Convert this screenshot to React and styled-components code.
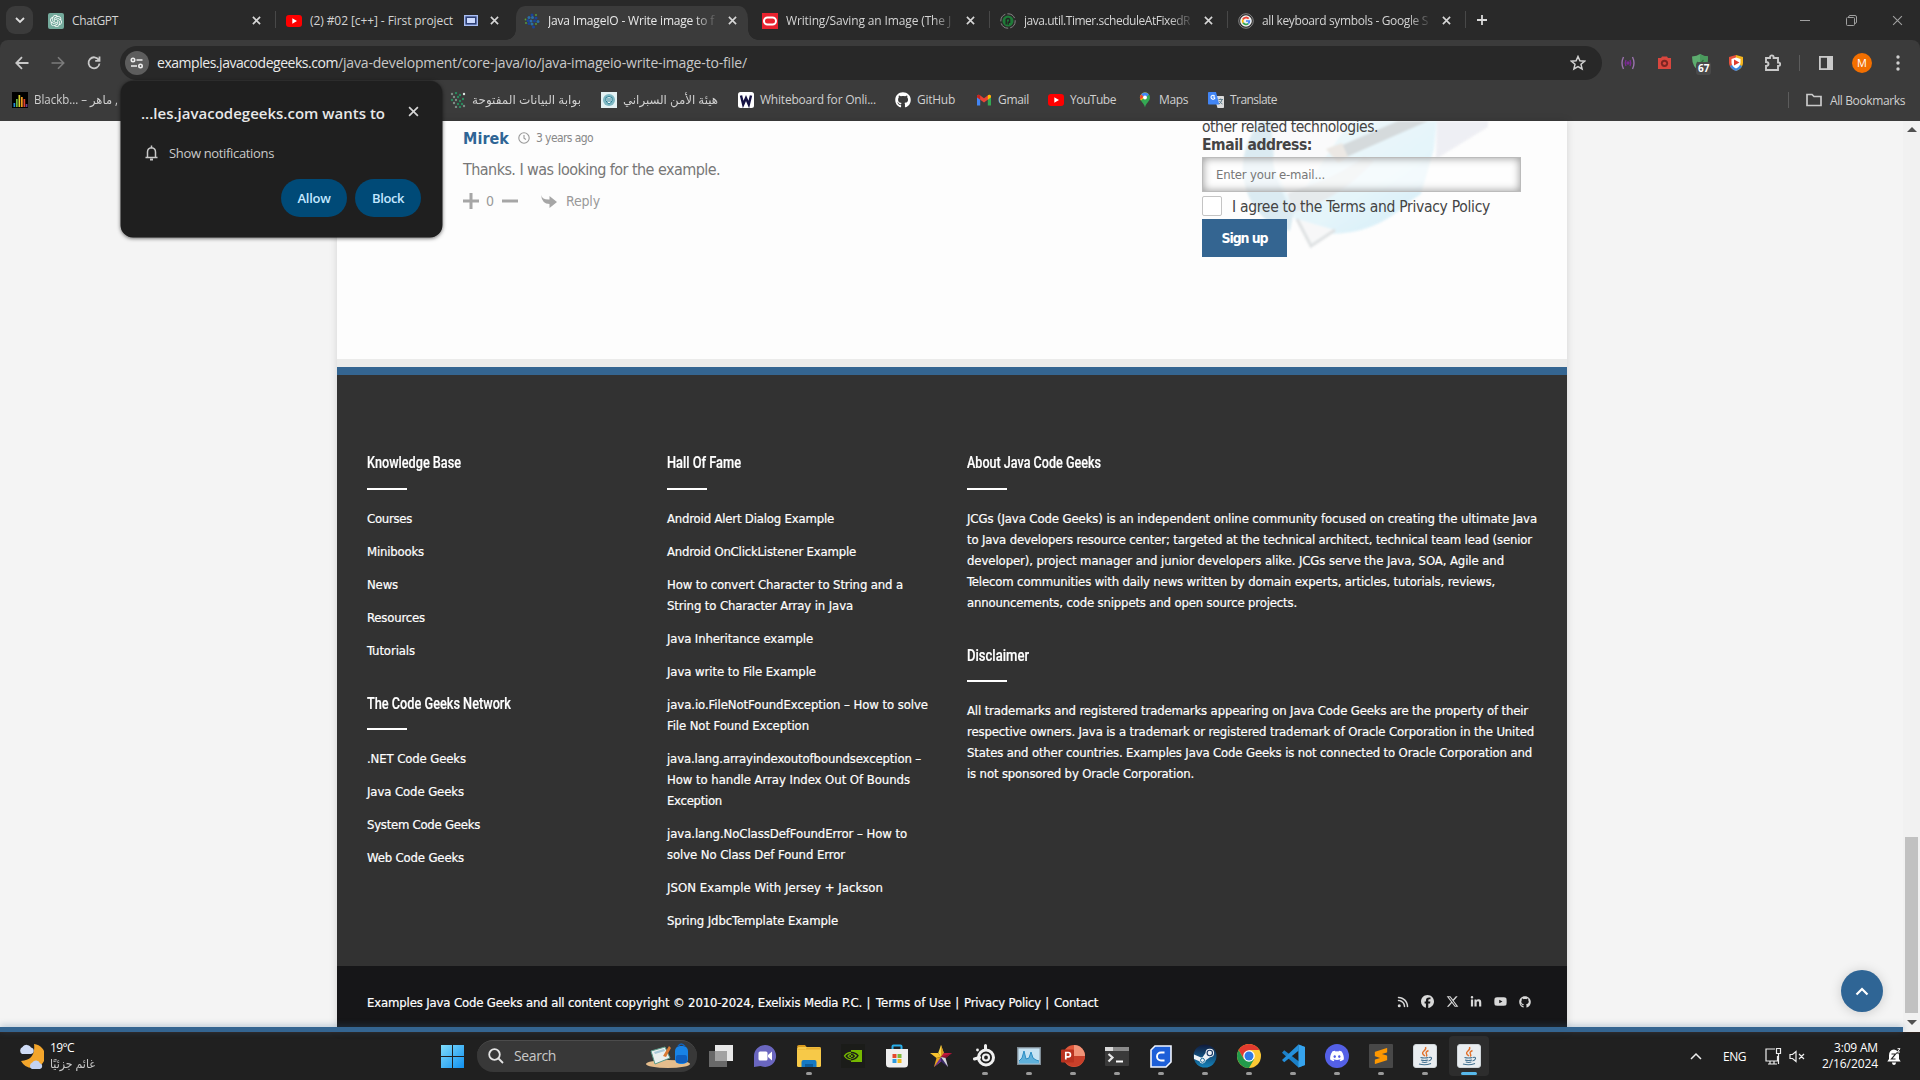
import React, { useLayoutEffect, useRef, useState } from 'react';
import styled, { createGlobalStyle, css } from 'styled-components';
import { FaRss, FaFacebook, FaXTwitter, FaLinkedinIn, FaYoutube, FaGithub, FaSteam, FaDiscord } from 'react-icons/fa6';
import { SiOpenai, SiSublimetext } from 'react-icons/si';

const UI = `'Open Sans', 'Noto Sans', 'DejaVu Sans', sans-serif`;
const SITE = `'DejaVu Sans Condensed', 'DejaVu Sans', sans-serif`;

const Global = createGlobalStyle`
  *, *::before, *::after { box-sizing: border-box; }
  html, body { margin: 0; padding: 0; background: #202020; overflow: hidden; }
  body { font-family: ${UI}; font-size: 12px; }
  svg { display: block; flex: none; }
`;

/* ---------- fitted text ---------- */
const FitBox = styled.span`
  display: inline-block;
  white-space: pre;
  transform-origin: 0 50%;
`;
function Fit({ w, squeeze, children }) {
  const ref = useRef(null);
  const [style, setStyle] = useState({});
  useLayoutEffect(() => {
    const natural = ref.current.getBoundingClientRect().width;
    if (squeeze) setStyle({ transform: `scaleX(${w / natural})`, width: w });
    else setStyle({ letterSpacing: `${(w - natural) / String(children).length}px` });
  }, []);
  return <FitBox ref={ref} style={style}>{children}</FitBox>;
}

/* ---------- shell ---------- */
const Screen = styled.div`
  width: 1920px; height: 1080px; display: flex; flex-direction: column; overflow: hidden; position: relative;
`;
const TabStrip = styled.div`
  height: 40px; flex: none; background: #292929; display: flex; align-items: flex-end; padding-left: 6px;
`;
const SearchTabs = styled.div`
  width: 27px; height: 28px; margin: 0 5px 6px 0; border-radius: 9px; background: #3b3b3b;
  display: flex; align-items: center; justify-content: center;
`;
const Tab = styled.div`
  width: 238px; height: 34px; display: flex; align-items: center; padding: 0 12px 5px 10px; position: relative;
  color: ${p => (p.$active ? '#e9e9e9' : '#d4d4d4')}; font-size: 12px;
  ${p => p.$active && css`
    background: #3b3b3b; background-clip: padding-box; border: solid transparent; border-width: 0 4px 0 2px; border-radius: 11px 13px 0 0; padding: 0 8px 5px;
    &::before, &::after { content: ''; position: absolute; bottom: 0; width: 10px; height: 10px; }
    &::before { left: -10px; background: radial-gradient(circle at 0 0, transparent 9.500px, #3b3b3b 10px); }
    &::after { right: -10px; background: radial-gradient(circle at 100% 0, transparent 9.500px, #3b3b3b 10px); }
  `}
  ${p => p.$line && css`border-right: 1px solid transparent; border-image: linear-gradient(transparent 18%, #484848 18%, #484848 64%, transparent 64%) 1; padding-right: 11px;`}
`;
const Fav = styled.span`width: 16px; height: 16px; flex: none; display: flex; margin-right: 8px;`;
const TabTitle = styled.div`
  flex: 1; overflow: hidden; white-space: nowrap; line-height: 18px; padding-top: 1px;
  mask-image: ${p => (p.$fade ? 'linear-gradient(90deg, #000 calc(100% - 22px), rgba(0,0,0,.1))' : 'none')};
`;
const TabClose = styled.span`width: 16px; margin-left: 8px; display: flex; justify-content: center; flex: none;`;
const NewTab = styled.span`width: 32px; height: 40px; display: flex; align-items: center; justify-content: center;`;
const WinControls = styled.div`
  margin-left: auto; height: 40px; display: flex; align-items: center; color: #9c9c9c;
  > span { width: 46px; display: flex; justify-content: center; }
`;
const Toolbar = styled.div`
  height: 43px; flex: none; background: #3b3b3b; display: flex; align-items: center; padding: 3px 0 0 4px; border-radius: 8px 8px 0 0;
`;
const ToolbarBack = styled.div`background: #292929; flex: none;`;
const Tool = styled.span`width: ${p => p.$w || 36}px; flex: none; display: flex; justify-content: center; align-items: center; position: relative;`;
const Omnibox = styled.div`
  width: 1482px; flex: none; height: 34px; margin-left: 8px; border-radius: 17px; background: #282828; display: flex; align-items: center; padding: 0 16px 0 5px;
`;
const SiteInfo = styled.span`
  width: 24px; height: 24px; border-radius: 50%; background: #5d5d5d; display: flex; align-items: center; justify-content: center; margin-right: 8px;
`;
const Url = styled.div`flex: 1; color: #ebebeb; font-size: 14px; line-height: 20px; white-space: nowrap;`;
const Path = styled.span`color: #c8c8c8;`;
const Badge = styled.span`
  position: absolute; left: 14px; top: 8px; height: 13px; padding: 0 2px; border-radius: 3px; background: #4a4a4a; color: #fff;
  font: 700 10px/13px ${UI};
`;
const Avatar = styled.span`
  width: 20px; height: 20px; border-radius: 50%; background: #f26f00; color: #fff; font: 400 11px/20px ${UI}; text-align: center;
`;
const VLine = styled.span`width: 1px; height: 16px; background: #5c5c5c;`;
const Bookmarks = styled.div`
  height: 38px; flex: none; background: #3b3b3b; display: flex; align-items: center; padding: 0 15px 4px 12px; color: #d0d0d0; font-size: 12px;
`;
const Mark = styled.div`
  width: ${p => p.$w}px; flex: none; display: flex; align-items: center; white-space: nowrap; line-height: 18px;
`;
const MarkIcon = styled.span`width: 16px; height: 16px; margin-right: 6px; display: flex; flex: none;`;
const AllMarks = styled.div`margin-left: auto; display: flex; align-items: center; gap: 8px; white-space: nowrap; ${VLine} { margin-right: 9px; }`;

/* ---------- permission prompt ---------- */
const Prompt = styled.div`
  position: absolute; left: 121px; top: 81px; width: 321px; height: 156px; border-radius: 12px; background: #1f1f1f; z-index: 5;
  box-shadow: 0 1px 4px rgba(0,0,0,.7), 0 0 0 .5px #333; padding: 20px 21px 20px 20px; display: flex; flex-direction: column;
`;
const PromptHead = styled.div`
  display: flex; justify-content: space-between; align-items: center; height: 24px; color: #e8e8e8; font-weight: 600; font-size: 15px;
  svg { margin: -3px 2px 0 0; }
`;
const PromptRow = styled.div`display: flex; align-items: center; gap: 11px; height: 20px; margin-top: 18px; padding-left: 4px; color: #cacaca; font-size: 13px;`;
const PromptButtons = styled.div`display: flex; gap: 8px; justify-content: flex-end; margin-top: 16px;`;
const Pill = styled.button`
  width: 66px; height: 38px; border: 0; border-radius: 19px; background: #004a77; color: #c2e7ff; font: 600 13px/38px ${UI}; padding: 0;
`;

/* ---------- page ---------- */
const Viewport = styled.div`height: 911px; flex: none; display: flex; background: #f4f4f4; position: relative;`;
const PageArea = styled.div`flex: 1; display: flex; flex-direction: column; position: relative;`;
const Container = styled.div`
  width: 1230px; margin-left: 337px; flex: 1; display: flex; flex-direction: column; box-shadow: 0 0 8px rgba(0,0,0,.13); font-family: ${SITE}; overflow: hidden;
`;
const Main = styled.div`height: 238px; flex: none; background: #fdfdfd; display: flex; justify-content: space-between; padding: 0 46px 0 126px;`;
const Comment = styled.div`padding-top: 6px;`;
const CommentHead = styled.div`display: flex; align-items: center; height: 22px; color: #888; font-size: 12px; svg { margin: 0 6px 0 9px; }`;
const Author = styled.span`color: #2f6595; font-weight: 700; font-size: 16px;`;
const CommentText = styled.div`color: #777; font-size: 16px; line-height: 24px; margin-top: 9px;`;
const CommentFoot = styled.div`
  display: flex; align-items: center; height: 22px; margin-top: 8px; color: #999; font-size: 14px;
  > span { margin-top: -1px; }
`;
const Gap = styled.span`width: ${p => p.$w}px; flex: none;`;
const Signup = styled.div`width: 319px; position: relative; color: #444; font-size: 15.5px;`;
const Watermark = styled.div`position: absolute; left: 38px; top: 0; opacity: .72; filter: blur(.8px);`;
const SignupBody = styled.div`position: relative; display: flex; flex-direction: column; align-items: flex-start;`;
const Line = styled.div`height: ${p => p.$h}px; line-height: ${p => p.$lh || p.$h}px; font-weight: ${p => (p.$bold ? 700 : 400)}; white-space: nowrap;`;
const Field = styled.div`
  width: 319px; height: 35px; margin-top: 3px; border: 1px solid #bbb; background: rgba(255,255,255,.6); box-shadow: inset 0 0 8px rgba(0,0,0,.42);
  padding-left: 13px; color: #777; font-size: 13px; line-height: 33px;
`;
const Agree = styled.label`display: flex; align-items: center; gap: 10px; height: 27px; color: #444; > span:last-child { margin-top: 2px; }`;
const Check = styled.span`width: 20px; height: 20px; background: #fff; border: 1px solid #c4c4c4; border-radius: 2px;`;
const SignButton = styled.button`
  width: 85px; height: 38px; border: 0; background: #346591; color: #fff; font: 700 14px/36px ${SITE}; padding: 0;
`;
const GreyBar = styled.div`height: 8px; flex: none; background: #ebebea;`;
const Footer = styled.div`
  height: 599px; flex: none; background: #323232; border-top: 8px solid #346591; padding: 75px 29px 0 30px; display: flex; color: #fff;
`;
const Col = styled.div`width: ${p => p.$w}px; flex: none; font-size: 13px; line-height: 21px; -webkit-text-stroke: .2px #fff;`;
const Heading = styled.h3`
  margin: ${p => (p.$top || 0)}px 0 18px; font: 500 17px/24px Roboto, sans-serif; height: ${p => p.$h || 40}px;
  &::after { content: ''; display: block; width: 40px; height: 2px; background: #fff; margin-top: ${p => (p.$h ? p.$h - 26 : 14)}px; }
`;
const Item = styled.div`margin-bottom: 12px; white-space: nowrap; > span { display: block; width: max-content; }`;
const Bottom = styled.div`
  flex: 1; background: #161618; color: #fff; font-size: 13px; display: flex; justify-content: space-between; padding: 26px 36px 0 30px; line-height: 22px;
  -webkit-text-stroke: .2px #fff;
`;
const Social = styled.div`display: flex; gap: 11.8px; height: 19px; align-items: center; color: #d8d8d8; -webkit-text-stroke: 0;`;
const BlueBar = styled.div`
  position: absolute; left: 0; right: 0; bottom: 0; height: 5px; background: #346591; box-shadow: 0 -1px 7px rgba(52,101,145,.4);
`;
const ToTop = styled.div`
  position: absolute; left: 1841px; top: 849px; width: 42px; height: 42px; border-radius: 50%; background: #2f6595;
  display: flex; align-items: center; justify-content: center; box-shadow: 0 1px 12px rgba(0,0,0,.17);
`;
const Scroll = styled.div`width: 17px; background: #f1f1f1; display: flex; flex-direction: column; align-items: center; padding-top: 6px;`;
const Thumb = styled.div`width: 13px; height: 176px; background: #c1c1c1; margin: 705px 0 7px;`;
const Arrow = styled.span`
  border: 5px solid transparent; height: 0; width: 0;
  ${p => (p.$up ? 'border-bottom-color: #505050; border-top: 0;' : 'border-top-color: #505050; border-bottom: 0;')}
`;

/* ---------- taskbar ---------- */
const Taskbar = styled.div`
  height: 48px; flex: none; background: #202020; border-top: 1px solid #2c221d; display: flex; align-items: center; color: #fff; padding: 0 0 1px 18px;
`;
const Weather = styled.div`width: 423px; display: flex; align-items: center; gap: 6px; font-size: 12px; line-height: 16px;`;
const Two = styled.div`display: flex; flex-direction: column; align-items: ${p => (p.$right ? 'flex-end' : 'flex-start')}; line-height: 16px;`;
const Dim = styled.span`color: #c8c8c8;`;
const SearchPill = styled.div`
  width: 220px; height: 32px; margin: 0 2px 0 13px; border-radius: 16px; background: #383838; border-top: 1px solid #4c4c4c; display: flex; align-items: center; padding: 0 6px 2px 11px; color: #c9c9c9; font-size: 14px; gap: 10px;
  > svg:last-child { margin-left: auto; }
`;
const TaskApp = styled.div`
  width: 40px; height: 40px; margin: 0 2px; display: flex; align-items: center; justify-content: center; position: relative; border-radius: 4px;
  background: ${p => (p.$active ? '#2d2d2d' : 'transparent')};
  &::after {
    content: ''; position: absolute; bottom: 1px; height: 3px; border-radius: 2px;
    width: ${p => (p.$active ? 16 : p.$run ? 6 : 0)}px; background: ${p => (p.$active ? '#57b8ea' : '#999')};
  }
`;
const Tray = styled.div`margin-left: auto; display: flex; align-items: center; font-size: 12px; padding-right: 19px;`;

/* ---------- drawings ---------- */
const X = ({ s = 9, c = '#d6d6d6', t = 1.8 }) => (
  <svg width={s} height={s} viewBox="0 0 10 10"><path d="M1 1l8 8M9 1l-8 8" stroke={c} strokeWidth={t} /></svg>
);
const YT = () => <svg width="16" height="16" viewBox="0 0 16 16"><rect y="2" width="16" height="12" rx="3" fill="#f00" /><path d="M6.3 5.3v5.4L11 8z" fill="#fff" /></svg>;
const Gpt = () => <svg width="16" height="16"><rect width="16" height="16" rx="2" fill="#74aa9c" /><SiOpenai x="2" y="2" size={12} color="#fff" /></svg>;
const Jcg = () => (
  <svg width="16" height="16">{[[8, 2, 1], [12, 2, 2], [5, 4.5, 0], [8.5, 4.5, 0], [12, 5, 1], [4, 7.5, 1], [1.5, 6.5, 2], [7, 8, 0], [10.5, 8, 1], [8, 11, 0], [5, 10.5, 1], [12, 11, 2], [9.5, 14, 1], [14, 8.500, 0], [2, 10, 2]].map(([x, y, k], i) =>
    <circle key={i} cx={x} cy={y} r={k === 2 ? 0.9 : 1.5} fill={['#2a6fa8', '#1a449c', '#56a03c'][k]} />)}</svg>
);
const Oracle = () => <svg width="16" height="16"><rect width="16" height="16" fill="#e8222e" /><rect x="2" y="4.5" width="12" height="7" rx="3.5" fill="none" stroke="#fff" strokeWidth="2" /></svg>;
const Tut = () => <svg width="16" height="16"><circle cx="8" cy="8" r="7.2" fill="none" stroke="#858585" strokeWidth="1" strokeDasharray="9 2" /><circle cx="8" cy="8" r="5.5" fill="#1f7a38" /><path d="M6.2 11.500V6.4Q8 4.600 9.6 6.200v3H8.200v2.500" stroke="#222" strokeWidth="1.4" fill="none" /></svg>;
const GFav = () => (
  <svg width="16" height="16"><circle cx="8" cy="8" r="7.3" fill="none" stroke="#858585" strokeWidth="1" /><circle cx="8" cy="8" r="5.8" fill="#f2f2f2" />
    <path d="M10.7 5.700a3.500 3.500 0 0 0-5.800.800" stroke="#ea4335" strokeWidth="1.8" fill="none" /><path d="M4.900 6.500a3.600 3.600 0 0 0 .200 3.200" stroke="#fbbc05" strokeWidth="1.8" fill="none" /><path d="M5.100 9.700a3.500 3.500 0 0 0 5.200.9" stroke="#34a853" strokeWidth="1.8" fill="none" /><path d="M8 8h3.4a3.4 3.4 0 0 1-1.100 2.600" stroke="#4285f4" strokeWidth="1.7" fill="none" /></svg>
);
const Media = () => <svg width="14" height="11"><rect x=".7" y=".7" width="12.6" height="9.6" fill="#2c3e74" stroke="#a9bdf2" strokeWidth="1.4" /><rect x="3" y="3" width="8" height="5" fill="#cddafd" /></svg>;
const Bars = () => <svg width="16" height="16"><rect width="16" height="16" fill="#000" />{[['#1f8ad8', 1.5, 11], ['#6ab43e', 4, 7], ['#d6d22c', 6.5, 3], ['#f39a1e', 9, 5], ['#e0402c', 11.5, 7], ['#6a3f91', 13.7, 12]].map(([c, x, y]) => <rect key={x} x={x} y={y} width="1.7" height={15 - y} fill={c} />)}</svg>;
const Dots = () => (
  <svg width="16" height="16">{[[2, 2], [6, 1], [10, 3], [4, 5], [8, 5], [2, 8], [6, 8], [10, 9], [13, 7], [4, 11], [8, 12], [12, 12], [6, 15], [10, 15], [14, 2], [14, 14]].map(([x, y], i) => <circle key={i} cx={x} cy={y} r="1.2" fill={i === 14 ? '#dfe9e4' : i % 3 ? '#2b8a5e' : '#7d8d86'} />)}</svg>
);
const Cyber = () => <svg width="16" height="16"><rect width="16" height="16" fill="#e4f2f4" /><circle cx="8" cy="8" r="6" fill="#7fb9c4" /><path d="M5 5.5q3-2 6 0v3.2q-1 2.5-3 3.3-2-1-3-3.3z" fill="#e9f6f8" stroke="#2c7f94" /><path d="M7 6v4M9 6v4" stroke="#2c7f94" /></svg>;
const WIcon = () => <svg width="16" height="16"><rect width="16" height="16" rx="2.5" fill="#fff" /><path d="M3 3.5l2.2 9L8 6l2.8 6.5 2.2-9" fill="none" stroke="#151243" strokeWidth="2.4" /></svg>;
const Gmail = () => (
  <svg width="16" height="16"><path d="M1 4v9.5h3.2V6.5z" fill="#4285f4" /><path d="M15 4v9.5h-3.2V6.5z" fill="#34a853" /><path d="M1 4.2Q1.3 2 3.6 3L8 6.3 12.4 3Q14.7 2 15 4.2V5.3L8 10.5 1 5.3z" fill="#ea4335" /><path d="M11.8 3.4l.6-.4Q14.7 2 15 4.2V5.3l-3.2 2.4z" fill="#fbbc04" /><path d="M1 4.2Q1.3 2 3.6 3l.6.5v4.2L1 5.3z" fill="#c5221f" /></svg>
);
const Maps = () => (
  <svg width="16" height="16"><path d="M8 .5A5 5 0 0 1 13 5.5C13 9.5 9 10.5 8 15.6 7 10.5 3 9.5 3 5.5A5 5 0 0 1 8 .5z" fill="#34a853" /><path d="M3.9 8.5L11.5 1.9A5 5 0 0 0 4 2.6 5 5 0 0 0 3.9 8.5z" fill="#fbbc04" /><path d="M8 .5a5 5 0 0 1 3.9 1.9L8 6 4 2.6A5 5 0 0 1 8 .5z" fill="#4285f4" /><path d="M4.1 2.4L6.8 4.7 3.3 7.6A5 5 0 0 1 4.1 2.4z" fill="#ea4335" /><circle cx="8" cy="5.5" r="1.9" fill="#fff" /></svg>
);
const Translate = () => (
  <svg width="16" height="16"><path d="M6 4h9.2q.8 0 .8.8V15q0 1-.8 1H9.5z" fill="#dcdcdc" /><path d="M.8 0H8l3.3 12.5H.8Q0 12.5 0 11.7V.8Q0 0 .8 0z" fill="#4285f4" /><path d="M7 5H4.8M6.6 4A2 2 0 1 0 7 5.6" stroke="#fff" fill="none" strokeWidth="1.1" /><path d="M10.5 7.5H15M12.7 6.5v1M14 7.5q-.5 3-3 4.5M11.5 9q.8 2 3 3" stroke="#607d8b" fill="none" /></svg>
);
const Stroke = ({ w = 16, h = 16, d, c = '#c9c9c9', t = 1.8, children }) => <svg width={w} height={h} viewBox={`0 0 ${w} ${h}`} fill="none" stroke={c} strokeWidth={t}><path d={d} />{children}</svg>;

const EXT = {
  wave: <Stroke c="#9a72ad" w={16} h={14} t={1.4} d="M3.5 1Q.5 7 3.5 13M12.5 1q3 6 0 12"><path stroke="#7a2a94" d="M6 4q-1.6 3 0 6M10 4q1.6 3 0 6" /><circle cx="8" cy="7" r="1.7" fill="#7a2a94" stroke="none" /></Stroke>,
  cam: <svg width="15" height="14"><path d="M1 2h3l1-1.5h5L11 2h3v11H1z" fill="#d9463e" /><circle cx="7.5" cy="7.3" r="3.6" fill="#7c2522" /><circle cx="7.5" cy="7.3" r="1.6" fill="#d9463e" /></svg>,
  shield: <svg width="16" height="18"><path d="M0 2.5Q5 2 8 0q3 2 8 2.5 0 11-8 15-8-4-8-15z" fill="#5dac6f" /><path d="M8 0q3 2 8 2.5 0 11-8 15z" fill="#4a9a5d" /><path d="M5 8l2.5 2.5L11.5 6" stroke="#2e7040" fill="none" strokeWidth="1.3" /></svg>,
  play: <svg width="14" height="16"><path d="M0 2L7 0v16Q0 13 0 8z" fill="#e9523d" /><path d="M7 0l7 2v6q0 5-7 8z" fill="#f5b51c" /><path d="M1 11q2 4 6 5 5-2 6-5L7 8z" fill="#3b86dd" /><path d="M2.5 4L7 2.5 11.5 4v4Q11 11.5 7 13.500 3 11.500 2.500 8z" fill="#fff" /><path d="M5 4.500v6L10.500 7.500z" fill="#dd3b2f" /></svg>,
};

const Files = () => <svg width="24" height="22"><path d="M0 2Q0 0 2 0h6l2 2.500H0z" fill="#d99a1e" /><rect y="2" width="24" height="20" rx="1.500" fill="#f7c948" /><path d="M0 4.500h24V3.500Q24 2.500 23 2.500H10L8 5H0z" fill="#e8ae2f" /><path d="M4.500 22v-5q0-2 2-2h11q2 0 2 2v5z" fill="#1579c4" /><rect x="8" y="19" width="8" height="3" fill="#0d5c9c" /></svg>;
const JavaCup = () => (
  <svg width="24" height="24"><rect x=".5" y=".5" width="23" height="23" rx="2.500" fill="#e9edf0" stroke="#cfd5d9" />
    <path d="M12.500 3q1 2-1.800 4.200T12 12M15.500 6.500q-3.500 1.600-2 3.600.8 1.200-.3 2.300" stroke="#e2702a" strokeWidth="1.400" fill="none" />
    <path d="M7.500 13.500q4 1 8 0M8 16q3.500 1 7 0M8.800 18q3 .9 5.600 0M6 20q6 1.800 12-.5M16 13.500q3-.8 2.500 1.200T15.500 17" stroke="#42708f" strokeWidth="1.100" fill="none" /></svg>
);
const TASKS = [
  [<svg width="24" height="22"><rect x="6" width="18" height="16" fill="#e8e8e8" /><rect y="6" width="18" height="16" fill="#777" opacity=".85" /><rect x="6" y="6" width="12" height="10" fill="#a2a2a2" /></svg>],
  [<svg width="24" height="24"><path d="M12 1a11 11 0 1 1-4.500 21L1 23V12A11 11 0 0 1 12 1z" fill="#6a66bf" /><rect x="5.500" y="7.500" width="9" height="9" rx="1.500" fill="#fff" /><path d="M15 11l4-3.500v9L15 13z" fill="#fff" /></svg>],
  [<Files />, 1],
  [<svg width="24" height="24"><rect width="24" height="24" fill="#1b1c19" /><rect x="10" y="6" width="11" height="12" fill="#76b900" /><path d="M10 8.500Q6 8.500 3.500 12 6 15.800 10 15.800M10 10.500q-2 0-3 1.500 1 1.800 3 1.800" stroke="#76b900" strokeWidth="1.300" fill="none" /><path d="M10 8.500q5 0 7 3.200-2.500 4-7 4.100M10 10.500q2.500 0 3.300 1.500-1.300 1.800-3.300 1.800" stroke="#1b1c19" strokeWidth="1.300" fill="none" /></svg>],
  [<svg width="24" height="24"><path d="M7.500 6V2.500q0-1 1-1h7q1 0 1 1V6" fill="none" stroke="#28aeea" strokeWidth="2" /><path d="M1 5h22v15q0 3.500-3.500 3.500h-15Q1 23.500 1 20z" fill="#efefef" /><path d="M7.500 10h4v4h-4z" fill="#e5482d" /><path d="M12.500 10h4v4h-4z" fill="#7db93a" /><path d="M7.500 15h4v4h-4z" fill="#2b9be0" /><path d="M12.500 15h4v4h-4z" fill="#f2b81c" /></svg>],
  [<svg width="24" height="24"><path d="M12 1l2.800 8L12 13 9.200 9z" fill="#f9d94a" /><path d="M12 1l2.800 8L12 13z" fill="#d99a1e" /><path d="M1 9h8.200L12 13l-4.500 1z" fill="#f7c22e" /><path d="M23 9h-8.200L12 13l4.500 1z" fill="#c0173e" /><path d="M23 9l-6.500 5L12 13z" fill="#8c1230" /><path d="M5 23l2.500-9 4.500-1v4.500z" fill="#e9a51a" /><path d="M5 23l7-10v4.500z" fill="#6b2d99" /><path d="M19 23l-2.500-9-4.500-1v4.500z" fill="#3a2a66" /><path d="M19 23l-2.500-9-4.500-1z" fill="#d8d8d8" /></svg>],
  [<svg width="24" height="24" fill="none" stroke="#f0f0f0"><circle cx="13" cy="13.500" r="7.500" strokeWidth="3" /><circle cx="13" cy="13.500" r="3" strokeWidth="2.200" /><path d="M12.500 1.500v4M1.500 15l5-1.500" strokeWidth="3" strokeLinecap="round" /><circle cx="4.500" cy="6" r="1.400" fill="#f0f0f0" stroke="none" /></svg>, 1],
  [<svg width="24" height="18"><rect x=".7" y=".7" width="22.600" height="16.600" fill="#c6e3f3" stroke="#7d8b95" strokeWidth="1.400" /><path d="M2 14l3-3 2-7 2 8 3-1 2-6 2 6 3 2 3 1v2.500H2z" fill="#5fb0da" /><path d="M2 14l3-3 2-7 2 8 3-1 2-6 2 6 3 2 3 1" fill="none" stroke="#2c8ec4" /></svg>, 1],
  [<svg width="24" height="24"><circle cx="13" cy="12" r="11" fill="#e0583b" /><path d="M13 1a11 11 0 0 1 11 11H13z" fill="#f19478" /><path d="M13 12h11a11 11 0 0 1-21 4z" fill="#c8402a" /><rect y="5.500" width="13" height="13" rx="1" fill="#b9321f" /><path d="M4.800 15.500V8.500h2.500a2.100 2.100 0 0 1 0 4.300H4.800" stroke="#fff" strokeWidth="1.700" fill="none" /></svg>, 1],
  [<svg width="24" height="19"><rect width="24" height="19" rx="1" fill="#3a3a3a" /><rect width="24" height="4" fill="#8a8a8a" /><rect width="8" height="4" fill="#d8d8d8" /><path d="M3.500 7l4 3.500-4 4" fill="none" stroke="#e8e8e8" strokeWidth="2.200" /><path d="M11 14.500h7" stroke="#fff" strokeWidth="2" /></svg>, 1],
  [<svg width="22" height="23"><path d="M5 1h16v16l-5 5H1V5z" fill="#1d5fd8" stroke="#f2f6ff" strokeWidth="1.600" /><path d="M14.500 7.500H11a4 4 0 0 0 0 8h3.500" fill="none" stroke="#fff" strokeWidth="1.900" /></svg>, 1],
  [<svg width="24" height="24"><defs><linearGradient id="st" x2="0" y2="1"><stop stopColor="#101a3c" /><stop offset="1" stopColor="#1583bb" /></linearGradient></defs><circle cx="12" cy="12" r="11.500" fill="url(#st)" /><path d="M1 10.500l7 3a3.200 3.200 0 0 1 1.500-.3l3-4.200a4.300 4.300 0 1 1 4.500 4.300l-4.200 3a3.300 3.300 0 0 1-6.400 1L1 15z" fill="#eef2f5" /><circle cx="16.800" cy="9" r="2.700" fill="none" stroke="#1b3a66" strokeWidth="1.100" /><circle cx="9.500" cy="16.300" r="2" fill="none" stroke="#1b6a9a" /></svg>, 1],
  [<svg width="24" height="24" viewBox="-12 -12 24 24"><circle r="12" fill="#fcc934" /><path d="M-10.390-6A12 12 0 0 1 10.390-6L0-6-5.200 3z" fill="#e23b2e" /><path d="M-10.390-6A12 12 0 0 0 0 12L5.200 3-5.200 3z" fill="#229a4b" /><circle r="5.800" fill="#fff" /><circle r="4.500" fill="#2f7ae5" /></svg>, 1],
  [<svg width="24" height="24"><path d="M17.500.500L24 3v18l-6.500 2.500L1 8.800 3.200 6.300 18 17.500z" fill="#1b80c8" /><path d="M17.500.500v6.200L3.200 18.200 1 16z" fill="#2490dc" /><path d="M17.500.500L24 3v18l-6.500 2.500z" fill="#36a4ee" /></svg>, 1],
  [<svg width="24" height="24"><circle cx="12" cy="12" r="12" fill="#5460e6" /><FaDiscord x="4.500" y="4.500" size={15} color="#fff" /></svg>, 1],
  [<svg width="24" height="24"><rect width="24" height="24" rx="1" fill="#484848" /><SiSublimetext x="4" y="4" size={16} color="#ff9800" /></svg>, 1],
  [<JavaCup />, 1],
  [<JavaCup />, 2],
];

/* ---------- data ---------- */
const TABS = [
  { icon: <Gpt />, t: 'ChatGPT', w: 46, line: true },
  { icon: <YT />, t: '(2) #02 [c++] - First project', w: 143, media: true },
  { icon: <Jcg />, t: 'Java ImageIO - Write image to f', w: 166, active: true, fade: true },
  { icon: <Oracle />, t: 'Writing/Saving an Image (The J', w: 165, fade: true, line: true },
  { icon: <Tut />, t: 'java.util.Timer.scheduleAtFixedR', w: 166, fade: true, line: true },
  { icon: <GFav />, t: 'all keyboard symbols - Google S', w: 166, fade: true, line: true },
];
const MARKS = [
  { icon: <Bars />, t: 'Blackb... – ماهر ,', w: 438, tw: 84, sq: true },
  { icon: <Dots />, t: 'بوابة البيانات المفتوحة', w: 151, tw: 109, sq: true },
  { icon: <Cyber />, t: 'هيئة الأمن السبراني', w: 137, tw: 95, sq: true },
  { icon: <WIcon />, t: 'Whiteboard for Onli...', w: 157, tw: 116 },
  { icon: <FaGithub size={16} color="#fff" />, t: 'GitHub', w: 81, tw: 38 },
  { icon: <Gmail />, t: 'Gmail', w: 72, tw: 31 },
  { icon: <YT />, t: 'YouTube', w: 89, tw: 46 },
  { icon: <Maps />, t: 'Maps', w: 71, tw: 29 },
  { icon: <Translate />, t: 'Translate', w: 90, tw: 47 },
];
const KNOW = [['Courses', 45], ['Minibooks', 57], ['News', 31], ['Resources', 58], ['Tutorials', 48]];
const NET = [['.NET Code Geeks', 99], ['Java Code Geeks', 97], ['System Code Geeks', 113], ['Web Code Geeks', 97]];
const FAME = [
  [['Android Alert Dialog Example', 167]],
  [['Android OnClickListener Example', 189]],
  [['How to convert Character to String and a', 236], ['String to Character Array in Java', 186]],
  [['Java Inheritance example', 146]],
  [['Java write to File Example', 149]],
  [['java.io.FileNotFoundException – How to solve', 261], ['File Not Found Exception', 142]],
  [['java.lang.arrayindexoutofboundsexception –', 254], ['How to handle Array Index Out Of Bounds', 243], ['Exception', 55]],
  [['java.lang.NoClassDefFoundError – How to', 240], ['solve No Class Def Found Error', 178]],
  [['JSON Example With Jersey + Jackson', 216]],
  [['Spring JdbcTemplate Example', 171]],
];
const ABOUT = [
  ['JCGs (Java Code Geeks) is an independent online community focused on creating the ultimate Java', 570],
  ['to Java developers resource center; targeted at the technical architect, technical team lead (senior', 565],
  ['developer), project manager and junior developers alike. JCGs serve the Java, SOA, Agile and', 537],
  ['Telecom communities with daily news written by domain experts, articles, tutorials, reviews,', 528],
  ['announcements, code snippets and open source projects.', 330],
];
const DISC = [
  ['All trademarks and registered trademarks appearing on Java Code Geeks are the property of their', 561],
  ['respective owners. Java is a trademark or registered trademark of Oracle Corporation in the United', 567],
  ['States and other countries. Examples Java Code Geeks is not connected to Oracle Corporation and', 565],
  ['is not sponsored by Oracle Corporation.', 227],
];
const LEGAL = [
  ['Examples Java Code Geeks and all content copyright © 2010-2024, Exelixis Media P.C.', 495],
  [' | ', 14], ['Terms of Use', 75], [' | ', 13], ['Privacy Policy', 77], [' | ', 13], ['Contact', 44],
];
const Lines = ({ rows }) => <Item>{rows.map(([t, w]) => <span key={t}><Fit w={w}>{t}</Fit></span>)}</Item>;

export default function App() {
  return (
    <Screen>
      <Global />
      <TabStrip>
        <SearchTabs><Stroke w={10} h={7} t={1.800} c="#dedede" d="M1 1l4 4 4-4" /></SearchTabs>
        {TABS.map(t => (
          <Tab key={t.t} $active={t.active} $line={t.line}>
            <Fav>{t.icon}</Fav>
            <TabTitle $fade={t.fade}><Fit w={t.w}>{t.t}</Fit></TabTitle>
            {t.media && <Media />}
            <TabClose><X /></TabClose>
          </Tab>
        ))}
        <NewTab><Stroke w={12} h={12} t={1.800} c="#dadada" d="M6 1v10M1 6h10" /></NewTab>
        <WinControls>
          <span><Stroke w={10} h={10} t={1} d="M0 5.500h10" c="#a0a0a0" /></span>
          <span><Stroke w={11} h={11} t={1} c="#a0a0a0" d="M2 2.500H7.500q1 0 1 1v6q0 1-1 1H1.500q-1 0-1-1v-6q0-1 1-1M2.500 2.500q0-2 1.500-2H9q1.500 0 1.500 1.500V7q0 1.500-2 1.500" /></span>
          <span><X s={11} c="#a0a0a0" t={1} /></span>
        </WinControls>
      </TabStrip>
      <ToolbarBack><Toolbar>
        <Tool><Stroke w={14} h={14} t={1.800} d="M13.500 7H1.500M7 1.200L1.300 7 7 12.800" /></Tool>
        <Tool><Stroke w={14} h={14} t={1.600} c="#7c7c7c" d="M.500 7h12M7 1.200L12.700 7 7 12.800" /></Tool>
        <Tool><Stroke w={14} h={14} t={1.800} d="M11.800 4A5.500 5.500 0 1 0 12.500 7.500M12.500.500V4.800H8.200" /></Tool>
        <Omnibox>
          <SiteInfo><Stroke w={14} h={12} t={1.600} c="#eee" d="M6.500 3H12.500M1 9h6"><circle cx="3" cy="3" r="1.700" /><circle cx="10.500" cy="9" r="1.700" /></Stroke></SiteInfo>
          <Url><Fit w={181}>examples.javacodegeeks.com</Fit><Path><Fit w={409}>/java-development/core-java/io/java-imageio-write-image-to-file/</Fit></Path></Url>
          <Stroke w={16} h={16} t={1.500} c="#d2d2d2" d="M8 1.500l1.900 4.300 4.700.4-3.600 3.100 1.100 4.600L8 11.500l-4.100 2.400L5 9.300 1.400 6.200l4.700-.4z" />
        </Omnibox>
        <Gap $w={8} />
        <Tool>{EXT.wave}</Tool><Tool>{EXT.cam}</Tool><Tool>{EXT.shield}<Badge>67</Badge></Tool><Tool>{EXT.play}</Tool>
        <Tool><Stroke w={17} h={18} t={1.900} d="M2 4h4V3.200a1.800 1.800 0 0 1 3.600 0V4H14v4.500h.5a1.700 1.700 0 0 1 0 3.400H14V16H2v-4q2.500-.2 2.500-2T2 8z" /></Tool>
        <Tool $w={18}><VLine /></Tool>
        <Tool><svg width="14" height="14"><rect x=".9" y=".9" width="12.200" height="12.200" fill="none" stroke="#c9c9c9" strokeWidth="1.800" /><rect x="8" width="6" height="14" fill="#c9c9c9" /></svg></Tool>
        <Tool><Avatar>M</Avatar></Tool>
        <Tool><svg width="4" height="16" fill="#cfcfcf"><circle cx="2" cy="2" r="1.700" /><circle cx="2" cy="8" r="1.700" /><circle cx="2" cy="14" r="1.700" /></svg></Tool>
      </Toolbar></ToolbarBack>
      <Bookmarks>
        {MARKS.map(m => <Mark key={m.t} $w={m.w}><MarkIcon>{m.icon}</MarkIcon><Fit w={m.tw} squeeze={m.sq}>{m.t}</Fit></Mark>)}
        <AllMarks><VLine /><Stroke w={16} h={14} t={1.700} d="M1 1.500h5l2 2h7v9H1z" /><Fit w={75}>All Bookmarks</Fit></AllMarks>
      </Bookmarks>

      <Viewport>
        <PageArea>
          <Container>
            <Main>
              <Comment>
                <CommentHead>
                  <Author><Fit w={46}>Mirek</Fit></Author>
                  <Stroke w={12} h={12} t={1.100} c="#999" d="M6 3v3.300l2 1.200"><circle cx="6" cy="6" r="5.200" /></Stroke>
                  <Fit w={57}>3 years ago</Fit>
                </CommentHead>
                <CommentText><Fit w={257}>Thanks. I was looking for the example.</Fit></CommentText>
                <CommentFoot>
                  <Stroke w={16} h={16} t={3} c="#a6a6a6" d="M8 0v16M0 8h16" /><Gap $w={7} /><Fit w={8}>0</Fit><Gap $w={8} />
                  <Stroke w={16} h={16} t={3} c="#a6a6a6" d="M0 8h16" /><Gap $w={23} />
                  <svg width="16" height="13"><path d="M0 0q1.500 5 8.500 4.500V1L16 7 8.500 13V9Q1 9 0 0z" fill="#a6a6a6" /></svg><Gap $w={9} /><Fit w={34}>Reply</Fit>
                </CommentFoot>
              </Comment>
              <Signup>
                <Watermark>
                  <svg width="250" height="130">
                    <defs><linearGradient id="wa" x2="1" y2="1"><stop stopColor="#eef8fb" /><stop offset=".6" stopColor="#dcf2fa" /><stop offset="1" stopColor="#bfe5f4" /></linearGradient></defs>
                    <path d="M100 0h97l-3 28-13 45-12 8q-35 34-85 32Q58 108 50 90L28 60z" fill="url(#wa)" />
                    <path d="M20 0Q-2 30 4 60q8 40 46 50l4-20Q38 70 33 40L38 0z" fill="#cfe5ee" />
                    <path d="M32 0q-2 50 22 84L90 30 110 0z" fill="#f9fafb" />
                    <path d="M104 37L188 0h-30L98 26z" fill="#c6cdd0" /><path d="M86 28l16-6 6 14-10 6z" fill="#e6e1db" />
                    <path d="M197 0h51v6L196 38z" fill="#e9eaf1" />
                    <path d="M48 72q50-16 76-36l10 4Q100 78 52 92z" fill="#dee3e6" />
                    <path d="M57 98l14 27 24-16" fill="#f5f6f7" stroke="#d3d7d9" strokeWidth="3" />
                  </svg>
                </Watermark>
                <SignupBody>
                  <Line $h={15} $lh={13}><Fit w={176}>other related technologies.</Fit></Line>
                  <Line $h={18} $bold><Fit w={110}>Email address:</Fit></Line>
                  <Field><Fit w={109}>Enter your e-mail...</Fit></Field>
                  <Agree><Check /><Fit w={258}>I agree to the Terms and Privacy Policy</Fit></Agree>
                  <SignButton><Fit w={46}>Sign up</Fit></SignButton>
                </SignupBody>
              </Signup>
            </Main>
            <GreyBar />
            <Footer>
              <Col $w={300}>
                <Heading><Fit squeeze w={94}>Knowledge Base</Fit></Heading>
                {KNOW.map(r => <Lines key={r[0]} rows={[r]} />)}
                <Heading $top={30} $h={39}><Fit squeeze w={144}>The Code Geeks Network</Fit></Heading>
                {NET.map(r => <Lines key={r[0]} rows={[r]} />)}
              </Col>
              <Col $w={300}>
                <Heading><Fit squeeze w={74}>Hall Of Fame</Fit></Heading>
                {FAME.map(r => <Lines key={r[0][0]} rows={r} />)}
              </Col>
              <Col $w={571}>
                <Heading><Fit squeeze w={134}>About Java Code Geeks</Fit></Heading>
                <Lines rows={ABOUT} />
                <Heading $top={30} $h={39}><Fit squeeze w={62}>Disclaimer</Fit></Heading>
                <Lines rows={DISC} />
              </Col>
            </Footer>
            <Bottom>
              <div>{LEGAL.map(([t, w], i) => <Fit key={i} w={w}>{t}</Fit>)}</div>
              <Social><FaRss size={12} /><FaFacebook size={13} /><FaXTwitter size={13} /><FaLinkedinIn size={12} /><FaYoutube size={13} /><FaGithub size={12} /></Social>
            </Bottom>
          </Container>
          <BlueBar />
          <ToTop><Stroke w={14} h={9} t={2.200} c="#fff" d="M1.500 7.500L7 2l5.500 5.500" /></ToTop>
        </PageArea>
        <Scroll><Arrow $up /><Thumb /><Arrow /></Scroll>
      </Viewport>

      <Taskbar>
        <Weather>
          <svg width="26" height="28"><path d="M16 2a12 12 0 0 1-2 24Q7 26 3 19 18 18 16 2z" fill="#f3a52b" /><path d="M4 12a4 4 0 0 1 .5-7A5 5 0 0 1 13 5.500 3.300 3.300 0 0 1 13 12z" fill="#cfdcf6" /><path d="M14 27a3.500 3.500 0 0 1 .3-6.500 4.400 4.400 0 0 1 7.700.7A3 3 0 0 1 22 27z" fill="#c3d2f2" /></svg>
          <Two><Fit w={24}>19°C</Fit><Dim><Fit squeeze w={45}>غائم جزئيًا</Fit></Dim></Two>
        </Weather>
        <svg width="23" height="23"><defs><linearGradient id="win" x2="1" y2="1"><stop stopColor="#7fdcfb" /><stop offset="1" stopColor="#1090f0" /></linearGradient></defs><path d="M0 0h11v11H0zM12 0h11v11H12zM0 12h11v11H0zM12 12h11v11H12z" fill="url(#win)" /></svg>
        <SearchPill>
          <Stroke w={16} h={16} t={1.800} c="#e4e4e4" d="M10.500 10.500l4.500 4.500"><circle cx="6.500" cy="6.500" r="5.300" /></Stroke>
          <Fit w={42}>Search</Fit>
          <svg width="46" height="26"><ellipse cx="23" cy="21" rx="22" ry="4" fill="#e5bd8c" /><path d="M6 8l14-4 5 11-15 6z" fill="#e9f0ee" stroke="#5b9b8a" /><path d="M9 9l10-3 1 2-10 3z" fill="#a7c9d8" /><path d="M24 3l-6 10 3 1 5-9z" fill="#d97a33" /><rect x="30" y="3" width="13" height="18" rx="5" fill="#1883e6" /><path d="M33 3.500q3-5 7 0" stroke="#1462b8" fill="none" strokeWidth="1.500" /><rect x="31" y="12" width="11" height="8" rx="2" fill="#0e5fc0" /></svg>
        </SearchPill>
        {TASKS.map(([icon, s], i) => <TaskApp key={i} $run={s >= 1} $active={s === 2}>{icon}</TaskApp>)}
        <Tray>
          <Stroke w={12} h={8} t={1.500} c="#eee" d="M1 7l5-5 5 5" /><Gap $w={21} />
          <Fit w={23}>ENG</Fit><Gap $w={19} />
          <Stroke w={17} h={18} t={1.200} c="#eee" d="M10 2H1v12h11.500V9M5 14v3M9 14v3M3 17h9M11.500 1.500h4v5h-4zM13.500 6.500V17" /><Gap $w={7} />
          <Stroke w={16} h={13} t={1.200} c="#eee" d="M1 4.500h2.500L7 1.500v10L3.500 8.500H1zM10 4l5 5M15 4l-5 5" /><Gap $w={17} />
          <Two $right><Fit w={44}>3:09 AM</Fit><Fit w={56}>2/16/2024</Fit></Two><Gap $w={9} />
          <svg width="14" height="17"><path d="M7 1.500q-5 .5-5 6V11L.300 13.500h13.400L12 11V7.500q0-5-5-6z" fill="#fff" /><path d="M4.800 14.500h4.400Q8.500 17 7 17t-2.200-2.500z" fill="#fff" /><path d="M4.500 6h4l-4 5h4M10 1h3.500L10 5h3.500" stroke="#222" strokeWidth="1.200" fill="none" /><path d="M10.500.700H13L10.500 4H13" stroke="#fff" fill="none" strokeWidth="1" /></svg>
        </Tray>
      </Taskbar>

      <Prompt>
        <PromptHead><Fit w={244}>...les.javacodegeeks.com wants to</Fit><X s={11} t={1.500} /></PromptHead>
        <PromptRow>
          <Stroke w={13} h={16} t={1.500} d="M.500 12.500h12M2.500 12.500V7Q2.500 3 6.500 2.700 10.500 3 10.500 7v5.500M6.500 2.700V.500"><path d="M5 14.500h3" strokeWidth="2" /></Stroke>
          <Fit w={105}>Show notifications</Fit>
        </PromptRow>
        <PromptButtons><Pill><Fit w={33}>Allow</Fit></Pill><Pill><Fit w={32}>Block</Fit></Pill></PromptButtons>
      </Prompt>
    </Screen>
  );
}
